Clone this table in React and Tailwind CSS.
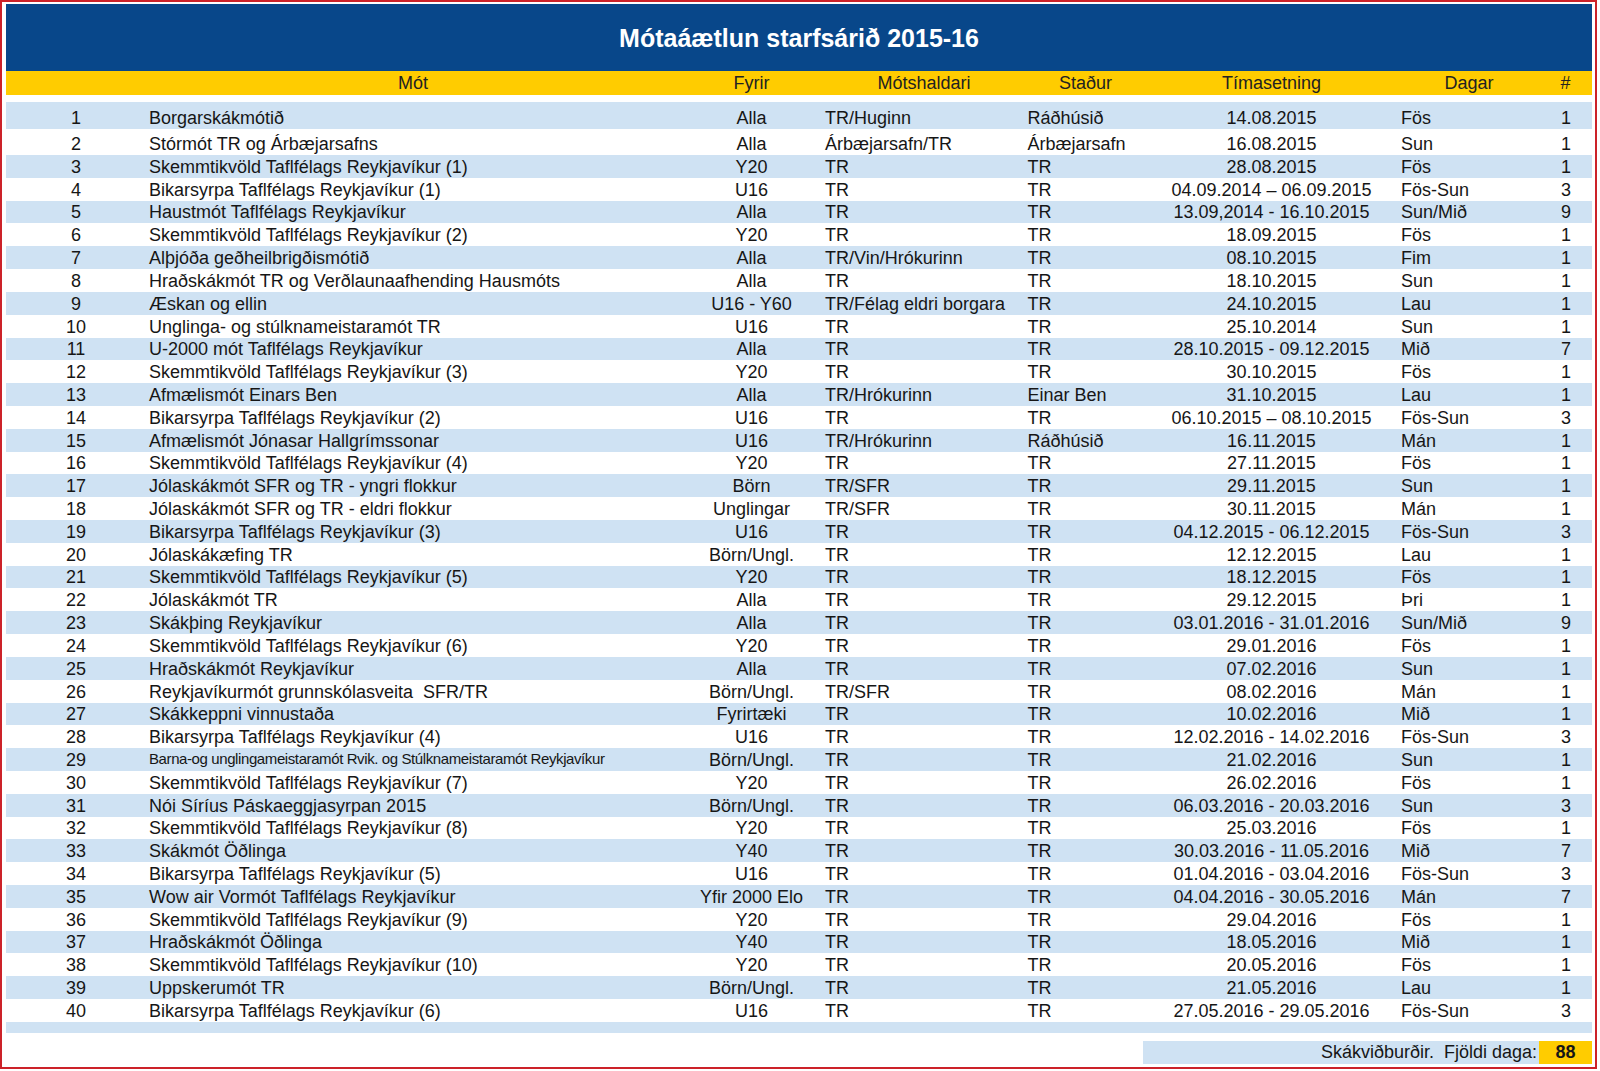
import React from "react";

const rows = [
  [1, "Borgarskákmótið", "Alla", "TR/Huginn", "Ráðhúsið", "14.08.2015", "Fös", 1],
  [2, "Stórmót TR og Árbæjarsafns", "Alla", "Árbæjarsafn/TR", "Árbæjarsafn", "16.08.2015", "Sun", 1],
  [3, "Skemmtikvöld Taflfélags Reykjavíkur (1)", "Y20", "TR", "TR", "28.08.2015", "Fös", 1],
  [4, "Bikarsyrpa Taflfélags Reykjavíkur (1)", "U16", "TR", "TR", "04.09.2014 – 06.09.2015", "Fös-Sun", 3],
  [5, "Haustmót Taflfélags Reykjavíkur", "Alla", "TR", "TR", "13.09,2014 - 16.10.2015", "Sun/Mið", 9],
  [6, "Skemmtikvöld Taflfélags Reykjavíkur (2)", "Y20", "TR", "TR", "18.09.2015", "Fös", 1],
  [7, "Alþjóða geðheilbrigðismótið", "Alla", "TR/Vin/Hrókurinn", "TR", "08.10.2015", "Fim", 1],
  [8, "Hraðskákmót TR og Verðlaunaafhending Hausmóts", "Alla", "TR", "TR", "18.10.2015", "Sun", 1],
  [9, "Æskan og ellin", "U16 - Y60", "TR/Félag eldri borgara", "TR", "24.10.2015", "Lau", 1],
  [10, "Unglinga- og stúlknameistaramót TR", "U16", "TR", "TR", "25.10.2014", "Sun", 1],
  [11, "U-2000 mót Taflfélags Reykjavíkur", "Alla", "TR", "TR", "28.10.2015 - 09.12.2015", "Mið", 7],
  [12, "Skemmtikvöld Taflfélags Reykjavíkur (3)", "Y20", "TR", "TR", "30.10.2015", "Fös", 1],
  [13, "Afmælismót Einars Ben", "Alla", "TR/Hrókurinn", "Einar Ben", "31.10.2015", "Lau", 1],
  [14, "Bikarsyrpa Taflfélags Reykjavíkur (2)", "U16", "TR", "TR", "06.10.2015 – 08.10.2015", "Fös-Sun", 3],
  [15, "Afmælismót Jónasar Hallgrímssonar", "U16", "TR/Hrókurinn", "Ráðhúsið", "16.11.2015", "Mán", 1],
  [16, "Skemmtikvöld Taflfélags Reykjavíkur (4)", "Y20", "TR", "TR", "27.11.2015", "Fös", 1],
  [17, "Jólaskákmót SFR og TR - yngri flokkur", "Börn", "TR/SFR", "TR", "29.11.2015", "Sun", 1],
  [18, "Jólaskákmót SFR og TR - eldri flokkur", "Unglingar", "TR/SFR", "TR", "30.11.2015", "Mán", 1],
  [19, "Bikarsyrpa Taflfélags Reykjavíkur (3)", "U16", "TR", "TR", "04.12.2015 - 06.12.2015", "Fös-Sun", 3],
  [20, "Jólaskákæfing TR", "Börn/Ungl.", "TR", "TR", "12.12.2015", "Lau", 1],
  [21, "Skemmtikvöld Taflfélags Reykjavíkur (5)", "Y20", "TR", "TR", "18.12.2015", "Fös", 1],
  [22, "Jólaskákmót TR", "Alla", "TR", "TR", "29.12.2015", "Þri", 1],
  [23, "Skákþing Reykjavíkur", "Alla", "TR", "TR", "03.01.2016 - 31.01.2016", "Sun/Mið", 9],
  [24, "Skemmtikvöld Taflfélags Reykjavíkur (6)", "Y20", "TR", "TR", "29.01.2016", "Fös", 1],
  [25, "Hraðskákmót Reykjavíkur", "Alla", "TR", "TR", "07.02.2016", "Sun", 1],
  [26, "Reykjavíkurmót grunnskólasveita  SFR/TR", "Börn/Ungl.", "TR/SFR", "TR", "08.02.2016", "Mán", 1],
  [27, "Skákkeppni vinnustaða", "Fyrirtæki", "TR", "TR", "10.02.2016", "Mið", 1],
  [28, "Bikarsyrpa Taflfélags Reykjavíkur (4)", "U16", "TR", "TR", "12.02.2016 - 14.02.2016", "Fös-Sun", 3],
  [29, "Barna-og unglingameistaramót Rvik. og Stúlknameistaramót Reykjavíkur", "Börn/Ungl.", "TR", "TR", "21.02.2016", "Sun", 1],
  [30, "Skemmtikvöld Taflfélags Reykjavíkur (7)", "Y20", "TR", "TR", "26.02.2016", "Fös", 1],
  [31, "Nói Síríus Páskaeggjasyrpan 2015", "Börn/Ungl.", "TR", "TR", "06.03.2016 - 20.03.2016", "Sun", 3],
  [32, "Skemmtikvöld Taflfélags Reykjavíkur (8)", "Y20", "TR", "TR", "25.03.2016", "Fös", 1],
  [33, "Skákmót Öðlinga", "Y40", "TR", "TR", "30.03.2016 - 11.05.2016", "Mið", 7],
  [34, "Bikarsyrpa Taflfélags Reykjavíkur (5)", "U16", "TR", "TR", "01.04.2016 - 03.04.2016", "Fös-Sun", 3],
  [35, "Wow air Vormót Taflfélags Reykjavíkur", "Yfir 2000 Elo", "TR", "TR", "04.04.2016 - 30.05.2016", "Mán", 7],
  [36, "Skemmtikvöld Taflfélags Reykjavíkur (9)", "Y20", "TR", "TR", "29.04.2016", "Fös", 1],
  [37, "Hraðskákmót Öðlinga", "Y40", "TR", "TR", "18.05.2016", "Mið", 1],
  [38, "Skemmtikvöld Taflfélags Reykjavíkur (10)", "Y20", "TR", "TR", "20.05.2016", "Fös", 1],
  [39, "Uppskerumót TR", "Börn/Ungl.", "TR", "TR", "21.05.2016", "Lau", 1],
  [40, "Bikarsyrpa Taflfélags Reykjavíkur (6)", "U16", "TR", "TR", "27.05.2016 - 29.05.2016", "Fös-Sun", 3],
];

const grid = "grid grid-cols-[140px_534px_143px_202px_121px_251px_144px_51px]";

function Row({ r, i }) {
  const [n, mot, fyrir, hald, stadur, tim, dagar, cnt] = r;
  const bg = i % 2 === 0 ? "bg-[#cfe2f3]" : "bg-white";
  const h = i === 0 ? "h-[27px]" : i === 1 ? "h-[26px]" : "h-[22.82px]";
  const small = n === 29;
  return (
    <div className={`${grid} ${bg} ${h} items-end text-[#161616]`}>
      <div className="text-center leading-[18px] pb-[2px]">{n}</div>
      <div
        className={
          small
            ? "pl-[3px] leading-[18px] pb-[3px] text-[15px] tracking-[-0.4px] whitespace-nowrap [font-family:'Liberation_Sans_Narrow','Arial_Narrow','Liberation_Sans',sans-serif]"
            : "pl-[3px] leading-[18px] pb-[2px] whitespace-pre"
        }
      >
        {mot}
      </div>
      <div className="text-center leading-[18px] pb-[2px] whitespace-nowrap">{fyrir}</div>
      <div className="pl-[2px] leading-[18px] pb-[2px] whitespace-nowrap">{hald}</div>
      <div className="pl-[2.5px] leading-[18px] pb-[2px] whitespace-nowrap">{stadur}</div>
      <div className="text-center leading-[18px] pb-[2px] whitespace-nowrap">{tim}</div>
      <div className="pl-[4px] leading-[18px] pb-[2px]">{dagar}</div>
      <div className="text-right pr-[21px] leading-[18px] pb-[2px]">{cnt}</div>
    </div>
  );
}

export default function App() {
  return (
    <div className="w-[1600px] h-[1071px] bg-white [font-family:'Liberation_Sans',Arial,sans-serif] text-[18px]">
      <div className="w-[1597px] h-[1069px] border-2 border-[#cc2229] pl-[4px] pr-[3px] pt-[2px] flex flex-col">
        <div className="h-[67px] bg-[#08478a] flex items-center justify-center text-white font-bold text-[25px] leading-[25px]">
          <span className="pt-[1px]">Mótaáætlun starfsárið 2015-16</span>
        </div>
        <div className={`${grid} h-[24px] bg-[#ffcc00] items-end text-[#222]`}>
          <div></div>
          <div className="text-center leading-[18px] pb-[3px]">Mót</div>
          <div className="text-center leading-[18px] pb-[3px]">Fyrir</div>
          <div className="text-center leading-[18px] pb-[3px]">Mótshaldari</div>
          <div className="text-center leading-[18px] pb-[3px]">Staður</div>
          <div className="text-center leading-[18px] pb-[3px]">Tímasetning</div>
          <div className="text-center leading-[18px] pb-[3px]">Dagar</div>
          <div className="text-center leading-[18px] pb-[3px] pr-[2px]">#</div>
        </div>
        <div className="h-[7px]"></div>
        {rows.map((r, i) => (
          <Row key={i} r={r} i={i} />
        ))}
        <div className="h-[11px] bg-[#cfe2f3]"></div>
        <div className="h-[8px]"></div>
        <div className="flex justify-end">
          <div className="w-[449px] h-[23px] bg-[#cfe2f3] flex items-end justify-end text-[#161616]">
            <div className="leading-[18px] pb-[3px] pr-[2px] whitespace-pre">Skákviðburðir.  Fjöldi daga:</div>
            <div className="w-[53px] h-[23px] bg-[#ffcc00] flex items-end justify-center font-bold">
              <span className="leading-[18px] pb-[3px]">88</span>
            </div>
          </div>
        </div>
      </div>
    </div>
  );
}
